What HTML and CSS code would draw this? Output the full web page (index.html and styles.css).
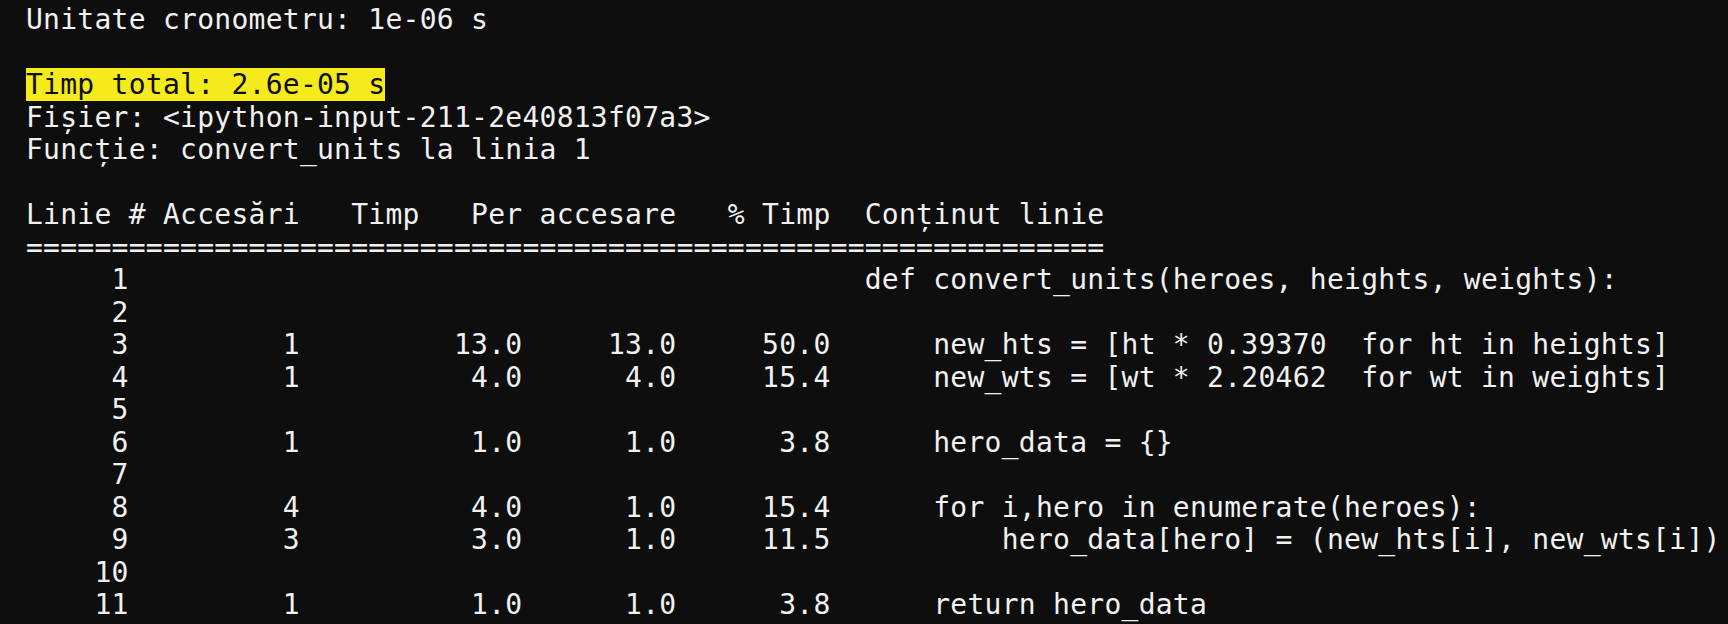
FILE: index.html
```html
<!DOCTYPE html>
<html lang="ro">
<head>
<meta charset="utf-8">
<title>Profil linie</title>
<link rel="stylesheet" href="styles.css">
</head>
<body>
<pre class="term">Unitate cronometru: 1e-06 s

<span class="hl">Timp total: 2.6e-05 s</span>
Fișier: &lt;ipython-input-211-2e40813f07a3&gt;
Funcție: convert_units la linia 1

Linie # Accesări   Timp   Per accesare   % Timp  Conținut linie
===============================================================
     1                                           def convert_units(heroes, heights, weights):
     2
     3         1         13.0     13.0     50.0      new_hts = [ht * 0.39370  for ht in heights]
     4         1          4.0      4.0     15.4      new_wts = [wt * 2.20462  for wt in weights]
     5
     6         1          1.0      1.0      3.8      hero_data = {}
     7
     8         4          4.0      1.0     15.4      for i,hero in enumerate(heroes):
     9         3          3.0      1.0     11.5          hero_data[hero] = (new_hts[i], new_wts[i])
    10
    11         1          1.0      1.0      3.8      return hero_data
</pre>
</body>
</html>
```

FILE: styles.css
```css
html, body {
  margin: 0;
  padding: 0;
  background: #0e0e0e;
  height: 100%;
  overflow: hidden;
}

.term {
  margin: 0;
  padding: 4px 0 0 26px;
  font-family: "DejaVu Sans Mono", "Liberation Mono", monospace;
  font-size: 28px;
  letter-spacing: 0.26px;
  line-height: 32.5px;
  color: #f1f1f1;
  white-space: pre;
}

.hl {
  background: #f4ea1c;
  color: #0e0e0e;
}
```
